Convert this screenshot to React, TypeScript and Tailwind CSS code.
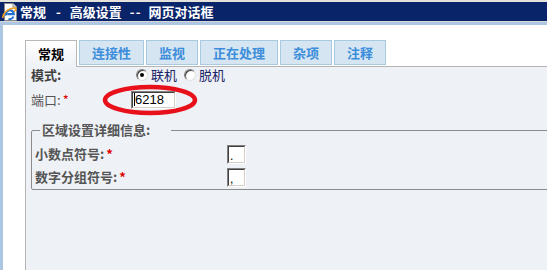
import React from "react";

function IeIcon() {
  return (
    <svg width="17" height="18" viewBox="0 0 17 18">
      <path d="M2.5 0.5 H11 L14.5 4 V17.5 H2.5 Z" fill="#ffffff" stroke="#8a8a8a" />
      <path d="M11 0.5 V4 H14.5" fill="#e8e8e8" stroke="#8a8a8a" />
      <path d="M4 12.5 A4 4 0 1 1 11.8 11.2 H5.2" fill="none" stroke="#1f6fd1" strokeWidth="2.2" />
      <path d="M6.5 16 A4 4 0 0 0 11.4 13.5" fill="none" stroke="#1f6fd1" strokeWidth="2" />
      <path d="M1 15 C0 11 6 5 12.5 5 C15 5 14 7 12 8.5" fill="none" stroke="#f0a020" strokeWidth="1.6" />
    </svg>
  );
}

function Radio({ checked }: { checked?: boolean }) {
  return (
    <span className="w-[12px] h-[12px] rounded-full border border-t-[#808080] border-l-[#808080] border-b-[#e0e0e0] border-r-[#e0e0e0] bg-white flex items-center justify-center shadow-[inset_1px_1px_0_#404040]">
      {checked && <span className="w-[4px] h-[4px] rounded-full bg-black" />}
    </span>
  );
}

function Box({ w, h, children }: { w: string; h: string; children?: React.ReactNode }) {
  return (
    <div className={`${w} ${h} border border-t-[#808080] border-l-[#808080] border-b-white border-r-white`}>
      <div className="w-full h-full bg-white border border-t-[#404040] border-l-[#404040] border-b-[#d4d0c8] border-r-[#d4d0c8] flex items-end">
        {children}
      </div>
    </div>
  );
}

const tabs = ["连接性", "监视", "正在处理", "杂项", "注释"];
const tabW = ["w-[65px]", "w-[52px]", "w-[78px]", "w-[52px]", "w-[52px]"];

export default function App() {
  return (
    <div className="w-[547px] h-[270px] overflow-hidden relative bg-white flex flex-col font-['Noto_Sans_CJK_SC',sans-serif] text-[13px] leading-[16px]">
      <div className="h-[2px] bg-[#e4e2da]" />
      <div className="h-[19px] bg-[#0a246a] flex items-center pl-[2px] text-white font-bold whitespace-pre">
        <IeIcon />
        <span className="ml-[1px] tracking-[0px]">常规</span>
        <span className="ml-[10px]">-</span>
        <span className="ml-[9px]">高级设置</span>
        <span className="ml-[8px] tracking-[1px]">--</span>
        <span className="ml-[7px]">网页对话框</span>
      </div>
      <div className="h-[1px] bg-[#d6d6d6]" />
      <div className="h-[3px] bg-[#adc7e3]" />
      <div className="flex flex-1 min-h-0">
        <div className="w-[3px] bg-[#adc7e3]" />
        <div className="flex-1 pl-[22px] pt-[15px] flex flex-col min-w-0">
          <div className="h-[26px] flex items-start gap-[2px] font-bold">
            <div className="relative z-10 w-[52px] h-[27px] border border-b-0 border-[#b8b8b8] bg-gradient-to-b from-white to-[#eef1f6] flex items-center justify-center text-black">
              常规
            </div>
            {tabs.map((t, i) => (
              <div
                key={t}
                className={`${tabW[i]} h-[25px] border border-[#a8cadf] bg-[#d5e5f1] flex items-center justify-center text-[#3c8ddb]`}
              >
                {t}
              </div>
            ))}
          </div>
          <div className="flex-1 border-l border-t border-[#b4b4b4] bg-[#eef1f6] pl-[5px] overflow-hidden">
            <div className="h-[15px] flex items-center">
              <span className="w-[105px] font-bold text-[#404040]">模式:</span>
              <Radio checked />
              <span className="ml-[3px] text-[#1a2466]">联机</span>
              <span className="ml-[7px]" />
              <Radio />
              <span className="ml-[3px] text-[#1a2466]">脱机</span>
            </div>
            <div className="mt-[8px] h-[19px] flex items-center">
              <span className="w-[100px] text-[#555555]">
                端口:<span className="text-[#e00000] ml-[2px]">*</span>
              </span>
              <Box w="w-[45px]" h="h-[18px]">
                <div className="h-full flex items-center font-['Liberation_Sans',sans-serif] text-[13px] text-black">
                  <span className="w-[1px] h-[13px] bg-black ml-[1px]" />
                  <span>6218</span>
                </div>
              </Box>
            </div>
            <fieldset className="mt-[13px] w-[620px] border border-[#8c8c8c] rounded-[2px] pl-[3px] pb-[2px]">
              <legend className="ml-[5px] pl-[2px] pr-[21px] font-bold text-[#555555]">
                区域设置详细信息:
              </legend>
              <div className="mt-[6px] h-[20px] flex items-center">
                <span className="w-[192px] font-bold text-[#555555]">
                  小数点符号:<span className="text-[#e00000] ml-[2px]">*</span>
                </span>
                <Box w="w-[19px]" h="h-[19px]">
                  <span className="ml-[1px] text-[12px] leading-[12px] text-black font-['Liberation_Sans',sans-serif]">.</span>
                </Box>
              </div>
              <div className="mt-[3px] h-[20px] flex items-center">
                <span className="w-[192px] font-bold text-[#555555]">
                  数字分组符号:<span className="text-[#e00000] ml-[2px]">*</span>
                </span>
                <Box w="w-[19px]" h="h-[19px]">
                  <span className="ml-[1px] text-[12px] leading-[12px] text-black font-['Liberation_Sans',sans-serif]">,</span>
                </Box>
              </div>
            </fieldset>
          </div>
        </div>
      </div>
      <svg className="absolute left-[100px] top-[82px]" width="100" height="36" viewBox="0 0 100 36">
        <ellipse cx="50" cy="18" rx="45" ry="13" fill="none" stroke="#e8101a" strokeWidth="4.5" />
      </svg>
    </div>
  );
}
